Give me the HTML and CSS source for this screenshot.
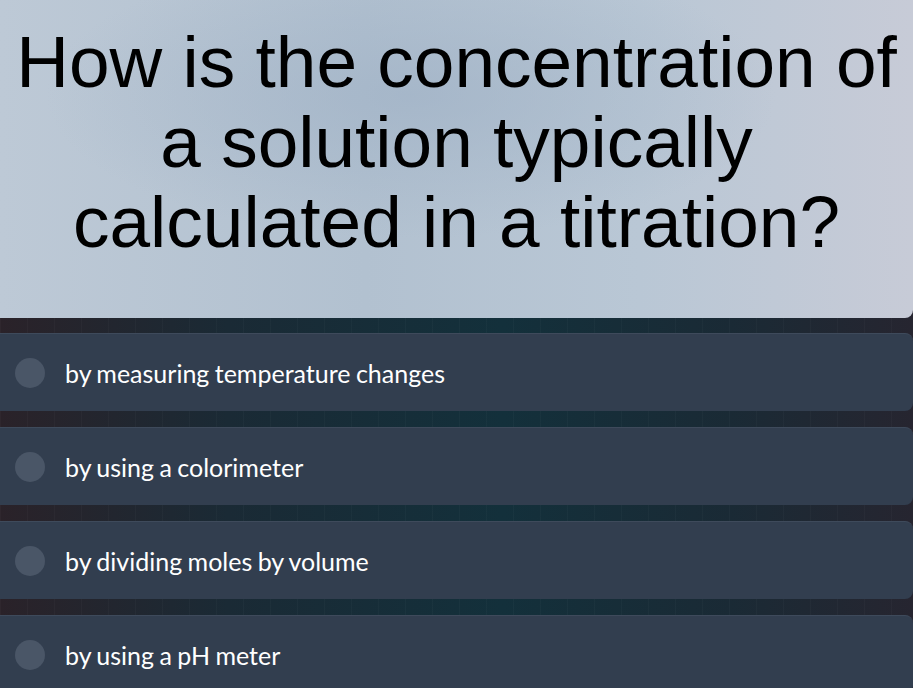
FILE: index.html
```html
<!DOCTYPE html>
<html lang="en">

<head>
  <meta charset="UTF-8" />
  <meta name="viewport" content="width=device-width, initial-scale=1.0" />
  <title>Quiz</title>
  <link rel="stylesheet" href="styles.css">
</head>

<body>
  <div class="quiz">
    <div class="question">
      <h1 class="questionText">How is the concentration of a solution typically calculated in a titration?</h1>
    </div>

    <!-- Opciones de respuesta -->
    <div class="options">
      <div class="option">
        <span class="dot"></span>
        <span class="label">by measuring temperature changes</span>
      </div>
      <div class="option">
        <span class="dot"></span>
        <span class="label">by using a colorimeter</span>
      </div>
      <div class="option">
        <span class="dot"></span>
        <span class="label">by dividing moles by volume</span>
      </div>
      <div class="option">
        <span class="dot"></span>
        <span class="label">by using a pH meter</span>
      </div>
    </div>
  </div>
</body>

</html>
```

FILE: styles.css
```css
html,
body {
  margin: 0;
  padding: 0;
  height: 100%;
  overflow: hidden;
}

:root {
  --card: #323e4f;
  --card-edge: #3e4a5b;
  --dot: #4a5667;
}

body {
  background:
    repeating-linear-gradient(90deg, rgba(255, 255, 255, 0.025) 0 1px, transparent 1px 27px),
    linear-gradient(90deg, #2a2229 0%, #1a2a35 25%, #13303b 55%, #1a2a35 80%, #262530 100%);
}

.quiz {
  display: flex;
  flex-direction: column;
  gap: 15px;
}

.question {
  height: 318px;
  display: flex;
  justify-content: center;
  align-items: center;
  border-radius: 0 0 8px 0;
  background:
    radial-gradient(ellipse 40% 45% at 45% 30%, rgba(160, 178, 198, 0.7), transparent),
    linear-gradient(90deg, #bdc9d6 0%, #b2c1d0 40%, #b9c7d5 70%, #c7cbd7 100%);
}

.questionText {
  margin: 0;
  padding: 0 8px 34px;
  color: #000;
  text-align: center;
  font-family: 'Liberation Sans', Arial, sans-serif;
  font-weight: normal;
  font-size: 73px;
  line-height: 80px;
}

.options {
  display: flex;
  flex-direction: column;
  gap: 16px;
}

.option {
  height: 78px;
  display: flex;
  align-items: center;
  gap: 20px;
  padding-left: 15px;
  background: var(--card);
  border-top: 1px solid var(--card-edge);
  border-radius: 0 8px 8px 0;
  box-sizing: border-box;
}

.dot {
  width: 30px;
  height: 30px;
  border-radius: 50%;
  background: var(--dot);
  flex-shrink: 0;
}

.label {
  color: #fff;
  font-family: Lato, 'Noto Sans', sans-serif;
  font-size: 25px;
  word-spacing: -1px;
}
```
